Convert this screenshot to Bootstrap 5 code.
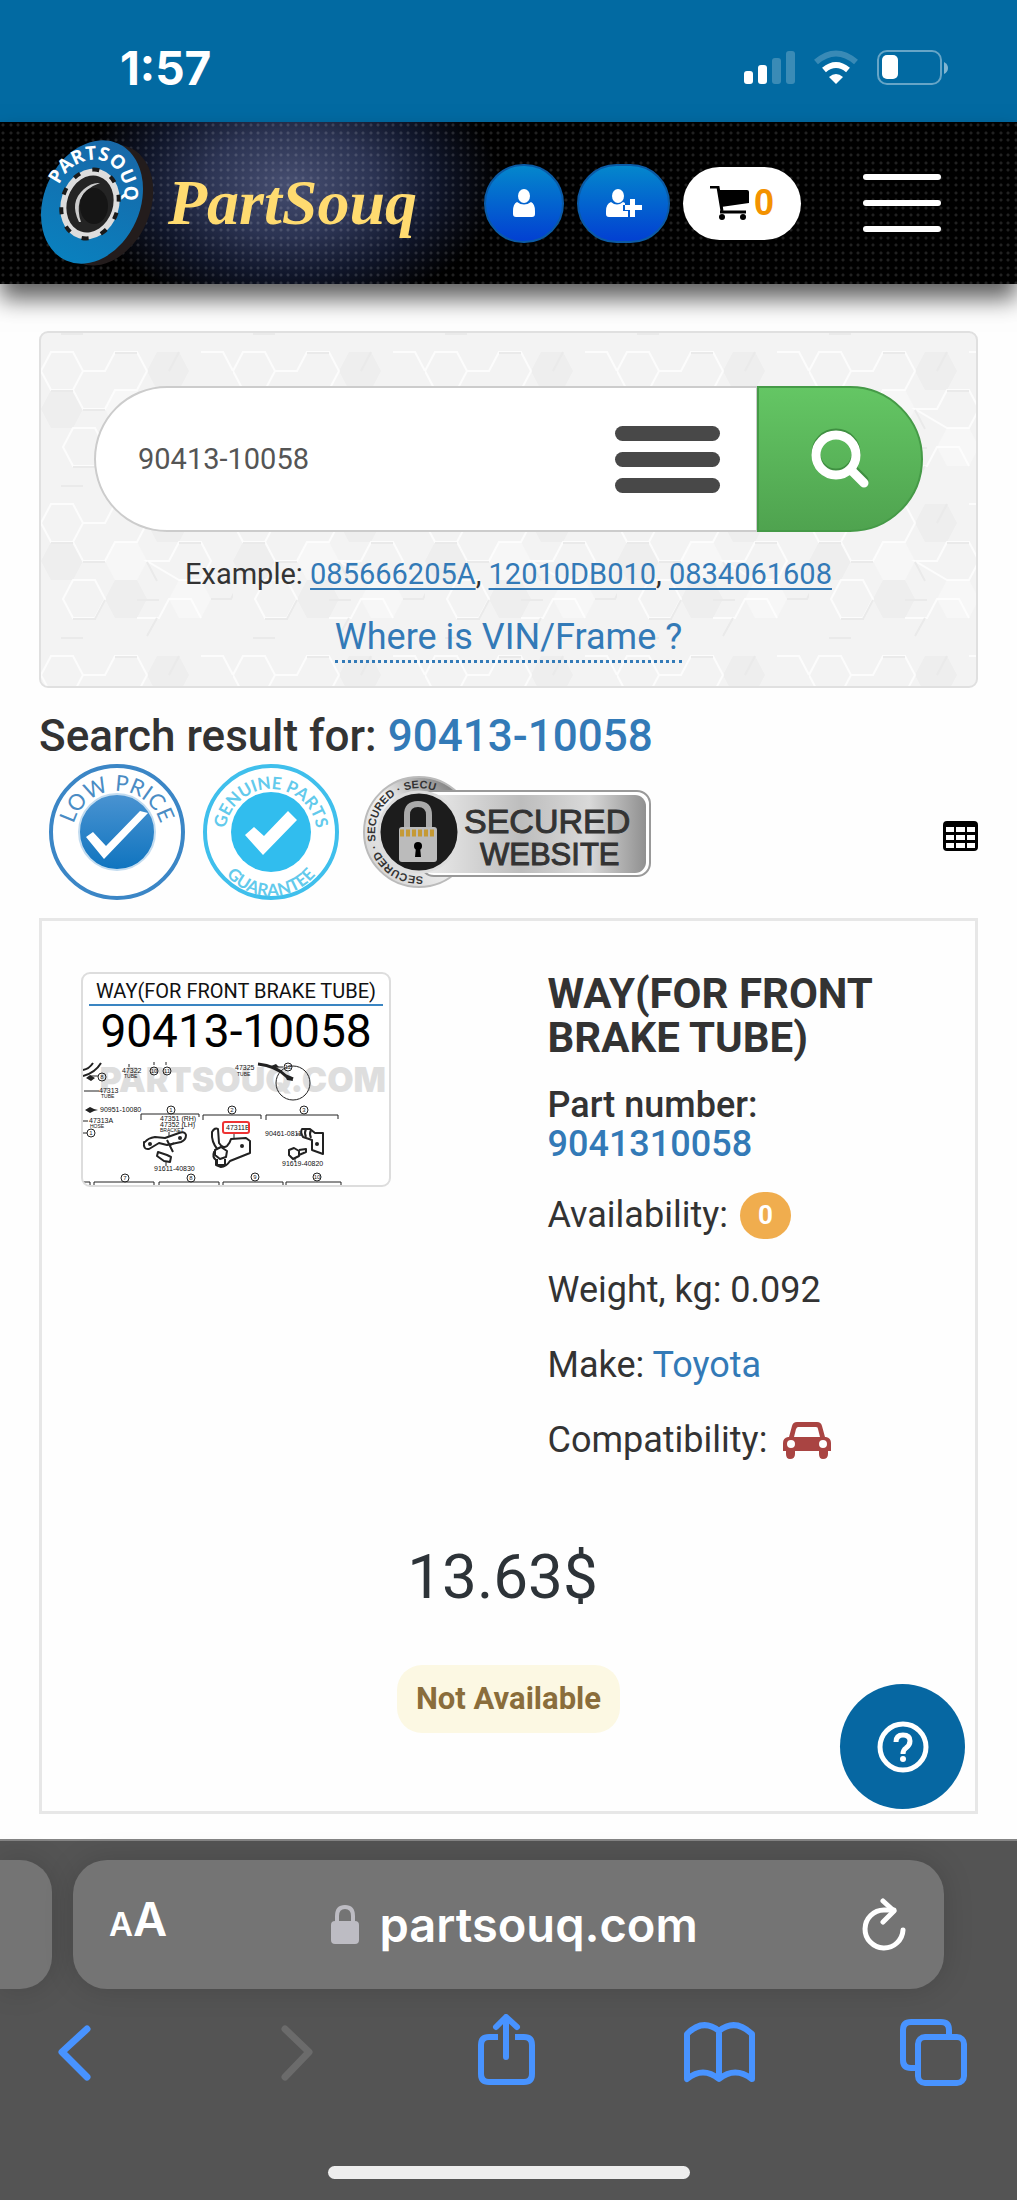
<!DOCTYPE html>
<html lang="en">
<head>
<meta charset="utf-8">
<meta name="viewport" content="width=device-width, initial-scale=1">
<title>PartSouq</title>
<link href="https://cdn.jsdelivr.net/npm/bootstrap@5.3.0/dist/css/bootstrap.min.css" rel="stylesheet">
<style>
body{font-family:Roboto,"Liberation Sans",sans-serif;color:#333;background:#fefefe;overflow-x:hidden}
a{color:#337ab7;text-decoration:none}
svg{display:block;flex-shrink:0}
button{padding:0;border:0;background:none}
.phone-status{height:122px;background:#026aa2;color:#fff;padding:0 69px 28px 120px;font-family:Inter,sans-serif}
.phone-time{font-size:46px;line-height:52px;font-weight:700}
.site-head{position:relative;height:162px;padding:0 76px 0 39px;background-color:#000;
 background-image:radial-gradient(circle at 3px 3px,rgba(255,255,255,.13) 1px,transparent 2px),radial-gradient(circle at 11px 3px,rgba(255,255,255,.13) 1px,transparent 2px),radial-gradient(circle at 3px 11px,rgba(255,255,255,.13) 1px,transparent 2px),radial-gradient(circle at 11px 11px,rgba(255,255,255,.13) 1px,transparent 2px),radial-gradient(ellipse 210px 130px at 290px 62px,#464e70 0,#2c3453 40%,#10162a 70%,#000 100%);
 background-size:15px 15px,15px 15px,15px 15px,15px 15px,auto;box-shadow:0 15px 22px rgba(0,0,0,.62)}
.brand-name{font:italic 700 64px/80px "Liberation Serif",serif;color:#ffdb70}
.head-tools{gap:13px}
.round-btn{height:79px;border-radius:40px;color:#fff;background:linear-gradient(#0487cc,#0240d2);border:2px solid #0b5aa5}
.w-user{width:80px}.w-plus{width:93px}
.cart-btn{width:118px;height:73px;border-radius:37px;background:#fff;color:#f39200;font:700 36px/40px "Liberation Sans",sans-serif;gap:5px}
.menu-btn{width:78px;margin-left:49px;gap:20px}
.menu-btn span{height:6px;border-radius:3px;background:#fff}
.page-main{padding:47px 39px 25px}
.search-well{position:relative;overflow:hidden;padding:53px 53px 23px;border:2px solid #e0e0e0;border-radius:9px;background:#f3f3f3}
.hex-bg{position:absolute;top:0;left:0}
.search-well>*:not(.hex-bg){position:relative}
.search-box{height:146px;border:2px solid #ccc;border-right-width:1px;border-radius:73px 0 0 73px;background:#fff;padding:0 36px 0 42px}
.search-box input{border:0;outline:0;min-width:0;background:none;font-size:29px;line-height:40px;color:#555;padding:0}
.list-btn{width:105px;gap:11px}
.list-btn span{height:15px;border-radius:8px;background:#484848}
.go-btn{width:166px;height:146px;border-radius:0 73px 73px 0;border:2px solid #459a47;background:linear-gradient(#64c664,#4fa34f)}
.hint{margin-top:22px;font-size:29px;line-height:40px}
.hint a{text-decoration:underline;text-decoration-thickness:2px;text-underline-offset:4px}
.vin{margin-top:20px;font-size:36px;line-height:46px;border-bottom:3px dotted #337ab7}
.result-title{margin:24px 0 0;font-size:44px;line-height:48px;font-weight:500}
.trust{height:144px;margin-bottom:14px;padding-left:8px;gap:15px}
.part-card{border:3px solid #e7e7e7;background:#fefefe;padding:51px 0 78px}
.part-card .col-6{padding:0 39px}
.thumb{display:block;width:310px;border:2px solid #ddd;border-radius:9px;overflow:hidden;background:#fff}
.part-name{font-size:42px;line-height:44px;font-weight:700;margin:0 0 26px}
.part-no{font-size:36px;line-height:39px;font-weight:500;margin:0 0 26px}
.fact{font-size:36px;line-height:50px;margin:0 0 25px}
.stock-fact{gap:12px}
.stock{width:51px;height:47px;border-radius:24px;background:#f0ad4e;color:#fff;font-size:26px;line-height:47px;font-weight:700}
.price{margin-top:68px;padding-right:12px;font-size:62px;line-height:88px;color:#2d3338}
.state{margin-top:44px;padding:0 19px;height:68px;line-height:68px;border-radius:25px;background:#fcf8e3;color:#8a6d3b;font-size:31px;font-weight:700}
.help-btn{position:absolute;right:10px;bottom:2px;width:125px;height:125px;border-radius:50%;background:#0667a2}
.safari{background:#545454;border-top:2px solid #858585;padding:19px 0 21px;font-family:Inter,sans-serif}
.tab-stub,.url-pill{height:129px;background:#747474;box-shadow:0 0 30px rgba(0,0,0,.15)}
.tab-stub{width:52px;border-radius:0 32px 32px 0}
.url-pill{margin:0 73px 0 21px;border-radius:34px;padding:0 38px 0 36px;color:#fff}
.aa-btn{color:#fff;font-weight:600;line-height:56px}
.aa-s{font-size:33px}.aa-l{font-size:47px}
.url-text{font-size:47px;line-height:56px;font-weight:600;gap:20px;color:#fff}
.tool-row{margin-top:25px;padding:0 47px 0 38px}
.home-bar{margin:80px auto 0;width:362px;height:13px;border-radius:7px;background:#eee}
</style>
</head>
<body>
<div class="phone-status d-flex align-items-end justify-content-between">
  <div class="phone-time">1:57</div>
  <svg width="208" height="46" viewBox="0 0 208 46" aria-label="Signal, Wi-Fi and battery">
    <g fill="#fff"><rect x="4" y="23" width="9" height="13" rx="3"/><rect x="18" y="17" width="9" height="19" rx="3"/><g opacity=".22"><rect x="32" y="10" width="9" height="26" rx="3"/><rect x="46" y="3" width="9" height="33" rx="3"/></g>
    <path d="M96 36l-7-7q7-6 14 0z"/></g>
    <path d="M84 22q12-10 24 0" fill="none" stroke="#fff" stroke-width="6"/>
    <path d="M76 14q20-17 40 0" fill="none" stroke="#fff" stroke-opacity=".22" stroke-width="6"/>
    <rect x="138" y="3" width="63" height="33" rx="9" fill="none" stroke="#fff" stroke-opacity=".4" stroke-width="2"/>
    <rect x="142" y="7" width="16" height="24" rx="5" fill="#fff"/><path d="M204 14q4 2 4 6t-4 6z" fill="#fff" opacity=".5"/>
  </svg>
</div>

<header class="site-head d-flex align-items-center">
  <a href="#" class="d-flex align-items-center gap-2">
    <svg width="121" height="130" viewBox="0 0 121 130">
      <defs><linearGradient id="tyre" x1="0" y1="0" x2="0" y2="1"><stop offset="0" stop-color="#1768a8"/><stop offset="1" stop-color="#0a80be"/></linearGradient></defs>
      <ellipse cx="65" cy="67" rx="46" ry="63" transform="rotate(24 65 67)" fill="#231c1c"/>
      <ellipse cx="53" cy="64" rx="48" ry="64" transform="rotate(24 53 64)" fill="url(#tyre)"/>
      <ellipse cx="51" cy="66" rx="29" ry="36" transform="rotate(18 51 66)" fill="#ddd"/>
      <ellipse cx="51" cy="66" rx="28" ry="35" transform="rotate(18 51 66)" fill="none" stroke="#1a1a1a" stroke-width="4" stroke-dasharray="7 13"/>
      <ellipse cx="51" cy="66" rx="23" ry="29" transform="rotate(18 51 66)" fill="#242424"/>
      <path d="M40 84Q30 64 45 51q8-7 16-6Q46 50 41 62q-3 11 1 22z" fill="#ccc"/>
      <ellipse cx="55" cy="68" rx="14" ry="18" fill="#151515"/>
      <path id="tyreArc" d="M20 47C29 26 51 17 67 24C85 33 90 54 81 78" fill="none"/>
      <text font-family="Open Sans,sans-serif" font-size="19" font-weight="700" fill="#fff"><textPath href="#tyreArc">PARTSOUQ</textPath></text>
    </svg>
    <span class="brand-name">PartSouq</span>
  </a>
  <div class="head-tools d-flex align-items-center ms-auto">
    <button class="round-btn w-user d-flex align-items-center justify-content-center" aria-label="Sign in">
      <svg width="22" height="28" viewBox="0 0 22 28" fill="#fff"><ellipse cx="11" cy="7" rx="6" ry="7"/><path d="M4 13q7 5 14 0 4 2 4 9v3q0 3-3 3H3q-3 0-3-3v-3q0-7 4-9z"/></svg></button>
    <button class="round-btn w-plus d-flex align-items-center justify-content-center" aria-label="Register">
      <svg width="36" height="28" viewBox="0 0 36 28" fill="#fff"><ellipse cx="12" cy="7" rx="6" ry="7"/><path d="M5 13q6 5 12 0l2 1v2h-2v6h5v6H3q-3 0-3-3v-3q0-7 5-9z"/><path d="M24 10h5v6h7v5h-7v7h-5v-7h-5v-5h5z"/></svg></button>
    <button class="cart-btn d-flex align-items-center justify-content-center" aria-label="Cart">
      <svg width="39" height="34" viewBox="0 0 39 34"><path d="M0 1h8l4 24" fill="none" stroke="#000" stroke-width="3"/><path d="M8 4h29q2 0 2 2v11l-28 4z"/><path d="M10 26h26" stroke="#000" stroke-width="3"/><circle cx="12" cy="31" r="3"/><circle cx="33" cy="31" r="3"/></svg>0</button>
    <button class="menu-btn d-flex flex-column" aria-label="Menu"><span></span><span></span><span></span></button>
  </div>
</header>

<main class="page-main position-relative">
  <section class="search-well text-center">
    <svg class="hex-bg" width="100%" height="100%" aria-hidden="true">
      <defs><pattern id="hex" width="192" height="152" patternUnits="userSpaceOnUse">
        <g fill="#eeeeee"><path d="M106 38l10-19h22l10 19-10 19h-22zM64 114l10-19h22l10 19-10 19H74zM0 76l10-19h22l10 19-10 19H10z"/></g>
        <g fill="#f7f7f7"><path d="M74 57h22l10 19-10 19H74L64 76zM138 95h22l10 19-10 19h-22l-10-19z"/></g>
        <g fill="none" stroke-width="2" stroke="#fff" stroke-opacity=".75">
          <path d="M10 19h22l10 19-10 19H10L0 38zM42 38h22l10-19h22l10 19-10 19H74L64 76H42L32 57M106 76h22l10-19h22l10 19-10 19h-22zM32 95h22l10 19-10 19H32l-10-19zM96 133h22l10-19h22l10 19M160 19h22l10 19"/></g>
        <g fill="none" stroke="#eaeaea" stroke-width="2"><path d="M10 58h22M42 77h22M74 20h22M106 77l10 19M138 58h22M32 134h22l10-19M96 115h22M128 38l10-19M170 114h20l6-12M20 1h22M106 151l10-18"/></g>
      </pattern></defs><rect width="100%" height="100%" fill="url(#hex)"/></svg>
    <form class="d-flex" onsubmit="return false">
      <div class="search-box d-flex align-items-center flex-grow-1">
        <input type="text" class="flex-grow-1" value="90413-10058" aria-label="Part number or VIN">
        <button type="button" class="list-btn d-flex flex-column" aria-label="Search history"><span></span><span></span><span></span></button>
      </div>
      <button class="go-btn d-flex align-items-center justify-content-center" aria-label="Search">
        <svg width="60" height="64" viewBox="0 0 60 64" fill="none" stroke-linecap="round"><g stroke="#3f8f41"><circle cx="26" cy="26" r="20" stroke-width="9"/><path d="M41 40l13 13" stroke-width="9"/></g><g stroke="#fff"><circle cx="26" cy="28" r="20" stroke-width="9"/><path d="M41 43l13 13" stroke-width="9"/></g></svg></button>
    </form>
    <div class="hint">Example: <a href="#">085666205A</a>, <a href="#">12010DB010</a>, <a href="#">0834061608</a></div>
    <a href="#" class="vin d-inline-block align-top">Where is VIN/Frame ?</a>
  </section>

  <h1 class="result-title">Search result for: <a href="#">90413-10058</a></h1>

  <div class="trust d-flex align-items-center">
    <svg width="140" height="140" viewBox="0 0 140 140">
      <defs><linearGradient id="lp" x1="0" y1="0" x2="0" y2="1"><stop offset="0" stop-color="#4a93d1"/><stop offset="1" stop-color="#0f74bf"/></linearGradient></defs>
      <circle cx="70" cy="70" r="66" fill="#fff" stroke="#3b86c6" stroke-width="4"/><circle cx="70" cy="70" r="38" fill="url(#lp)" stroke="#c3dcf0" stroke-width="2"/>
      <path d="M39 75l7-5 13 14 34-35 8 2-44 46z" fill="#fff"/>
      <path id="lpArc" d="M25 74A45 45 0 0 1 115 74" fill="none"/>
      <text font-family="Lato,sans-serif" font-size="22" fill="#4a8cc4"><textPath href="#lpArc" startOffset="50%" text-anchor="middle">LOW PRICE</textPath></text></svg>
    <svg width="140" height="140" viewBox="0 0 140 140">
      <circle cx="69" cy="70" r="66" fill="#fff" stroke="#3fbfec" stroke-width="4"/><circle cx="69" cy="70" r="40" fill="#31bdee"/>
      <path d="M43 73l9-8 10 9 24-25 9 9-34 35z" fill="#fff"/>
      <path id="gpArc" d="M23 73A46 46 0 0 1 115 73" fill="none"/><path id="ggArc" d="M11 76A58 58 0 0 0 127 76" fill="none"/>
      <g font-family="Lato,sans-serif" font-size="17" font-weight="700" fill="#62caec"><text><textPath href="#gpArc" startOffset="50%" text-anchor="middle">GENUINE PARTS</textPath></text><text><textPath href="#ggArc" startOffset="50%" text-anchor="middle">GUARANTEE</textPath></text></g></svg>
    <svg width="300" height="120" viewBox="-4 0 300 120">
      <defs><linearGradient id="sil"><stop offset="0" stop-color="#eee"/><stop offset=".45" stop-color="#bdbdbd"/><stop offset=".75" stop-color="#d9d9d9"/><stop offset="1" stop-color="#909090"/></linearGradient>
      <linearGradient id="ring" x1="0" y1="1" x2="1" y2="0"><stop offset="0" stop-color="#ccc"/><stop offset=".5" stop-color="#f2f2f2"/><stop offset="1" stop-color="#555"/></linearGradient></defs>
      <circle cx="58" cy="60" r="55" fill="url(#ring)" stroke="#bbb" stroke-width="2"/>
      <rect x="60" y="19" width="229" height="85" rx="13" fill="#fff" stroke="#999" stroke-width="2"/>
      <rect x="58" y="23" width="227" height="78" rx="11" fill="url(#sil)"/>
      <circle cx="58" cy="60" r="40" fill="#1c1c1c" stroke="#ddd" stroke-width="3"/>
      <path id="seArc" d="M62 104A44 44 0 1 1 76 20" fill="none"/>
      <text font-family="Liberation Sans,sans-serif" font-size="11" font-weight="700" fill="#333"><textPath href="#seArc">SECURED · SECURED · SECURED</textPath></text>
      <path d="M46 57V43q0-11 11-11t11 11v14" fill="none" stroke="#aaa" stroke-width="6"/><rect x="38" y="55" width="38" height="35" rx="3" fill="#bbb"/><path d="M39 61h36" stroke="#c59a35" stroke-width="7" stroke-dasharray="4 2"/><circle cx="57" cy="74" r="4"/><path d="M55 75h4l1 10h-6z"/>
      <g font-family="Liberation Sans,sans-serif" fill="#333" stroke="#333"><text x="103" y="61" font-size="34">SECURED</text><text x="119" y="93" font-size="31">WEBSITE</text></g></svg>
    <button class="ms-auto mt-2" aria-label="Table view">
      <svg width="35" height="30" viewBox="0 0 35 30"><path fill="#000" fill-rule="evenodd" d="M4 0h27q4 0 4 4v22q0 4-4 4H4q-4 0-4-4V4q0-4 4-4zM3 6v5h8V6zM13 6v5h9V6zM24 6v5h8V6zM3 14v5h8v-5zM13 14v5h9v-5zM24 14v5h8v-5zM3 22v5h8v-5zM13 22v5h9v-5zM24 22v5h8v-5z"/></svg></button>
  </div>

  <section class="part-card position-relative">
    <div class="row g-0">
      <div class="col-6">
        <a href="#" class="thumb" aria-label="Part diagram">
          <svg width="100%" viewBox="0 0 306 211" font-family="Roboto,sans-serif">
            <text x="153" y="24" font-size="20" text-anchor="middle" fill="#111">WAY(FOR FRONT BRAKE TUBE)</text>
            <path d="M6 31h294" stroke="#3a85c2" stroke-width="2"/>
            <text x="153" y="73" font-size="46" text-anchor="middle" fill="#000">90413-10058</text>
            <text x="303" y="118" font-family="Inter,sans-serif" font-weight="900" font-size="34" text-anchor="end" fill="#dedede">PARTSOUQ.COM</text>
            <g font-family="Liberation Sans,sans-serif" font-size="7" fill="#111"><text x="39" y="99">47322</text><text x="41" y="104" font-size="5">TUBE</text><text x="152" y="96">47325</text><text x="154" y="102" font-size="5">TUBE</text><text x="16" y="119">47313</text><text x="18" y="124" font-size="5">TUBE</text><text x="17" y="138">90951-10080</text><text x="6" y="149">47313A</text><text x="7" y="154" font-size="5">HOSE</text><text x="77" y="147">47351 (RH)</text><text x="77" y="153">47352 (LH)</text><text x="77" y="158" font-size="5">BRACKET</text><text x="71" y="197">91611-40830</text><text x="143" y="156">47311B</text><text x="182" y="162">90461-08112</text><text x="199" y="192">91619-40820</text></g>
            <g fill="none" stroke="#222" stroke-width="1"><path d="M58 146v-6h58v3M120 146v-5h58v4M183 146v-5h72v4M0 208h7v3M11 211v-3h60v3M76 211v-3h60v3M140 211v-3h60v3M203 211v-3h55v3M15 102H7M1 117h15M0 147h5M0 159h4M86 158v12M151 158v10M83 187v5M212 182v6M213 160h7M46 90v3M71 88v3M83 88v3M200 93h-10"/>
            <circle cx="210" cy="109" r="17"/><path d="M175 90q18 2 28 12l7 3" stroke-width="3"/><path d="M0 102q12-3 18-13M0 96q6-1 10-7" stroke-width="2"/>
            <circle cx="88" cy="136" r="4"/><circle cx="149" cy="136" r="4"/><circle cx="221" cy="136" r="4"/><circle cx="19" cy="103" r="4"/><circle cx="71" cy="97" r="4"/><circle cx="84" cy="97" r="4"/><circle cx="205" cy="93" r="4"/><circle cx="8" cy="159" r="4"/><circle cx="42" cy="204" r="4"/><circle cx="108" cy="204" r="4"/><circle cx="172" cy="203" r="4"/><circle cx="234" cy="203" r="4"/></g>
            <g font-family="Liberation Sans,sans-serif" font-size="6" text-anchor="middle" fill="#222"><text x="88" y="138">1</text><text x="149" y="138">2</text><text x="221" y="138">3</text><text x="19" y="105">8</text><text x="71" y="99">10</text><text x="84" y="99">11</text><text x="205" y="95">12</text><text x="8" y="161">1</text><text x="42" y="206">7</text><text x="108" y="206">8</text><text x="172" y="205">9</text><text x="234" y="205">10</text></g>
            <g fill="#fff" stroke="#222" stroke-width="2" stroke-linejoin="round"><path d="M62 168q3-4 10-5l10 1 14-5q6-2 7 2 0 5-5 7l-14 3-8-2-10 6q-6 1-5-7z"/><path d="M84 166l6 12M86 172l5-3" fill="none"/><path d="M75 178l9 3 4 2-1 5-6-1-7-5z"/><path d="M129 158q3-5 6-3l1 14q4 6 8 3 3-3 4-7l15-1 4 3v12l-20 8q-4 6-9 6l-5-2v-5q-4-3-2-8l4-2q-7-8-6-18z"/><path d="M132 176l6-3 6 4-1 6-6 2-5-4zM134 185v6h8v-6"/><path d="M219 155h8l5 4h8v21l-11-4v-10l-9-3q-3-5-1-8z"/><path d="M223 155q-2 4 0 8M228 156q-2 4 0 8" fill="none"/><path d="M206 176l5-2 5 3v5l-6 3-4-4zM216 176l7-1v3l-7 3"/></g>
            <g fill="#222"><circle cx="67" cy="170" r="2"/><circle cx="97" cy="164" r="2"/><circle cx="159" cy="172" r="2"/><circle cx="234" cy="170" r="2"/><path d="M2 136l5-3 4 2 4 1-4 1-4 2zM3 104l4-3 5 3-4 3zM188 92l5-2 3 3-5 1zM202 102l6 1 2 4-6-1z"/></g>
            <rect x="140" y="148" width="26" height="11" rx="2" fill="none" stroke="#e33" stroke-width="2"/>
          </svg></a>
      </div>
      <div class="col-6">
        <h2 class="part-name">WAY(FOR FRONT BRAKE TUBE)</h2>
        <h3 class="part-no">Part number: <a href="#" class="d-block">9041310058</a></h3>
        <p class="fact stock-fact d-flex align-items-center">Availability: <span class="stock text-center">0</span></p>
        <p class="fact">Weight, kg: 0.092</p>
        <p class="fact">Make: <a href="#">Toyota</a></p>
        <p class="fact d-flex align-items-center mb-0 gap-3">Compatibility:
          <svg width="48" height="37" viewBox="0 0 48 37"><path fill="#a94442" fill-rule="evenodd" d="M14 0h20q4 0 5 4l3 11h1q5 1 5 6v8h-3v3q0 5-5 5-4 0-4-5v-3H12v3q0 5-5 5-4 0-4-5v-3H0v-8q0-5 5-6h1L9 4q1-4 5-4zm1 5q-1 0-2 2l-2 8h26l-2-8q0-2-2-2zM8 18a4 4 0 1 0 0 8 4 4 0 0 0 0-8zm32 0a4 4 0 1 0 0 8 4 4 0 0 0 0-8z"/></svg></p>
      </div>
    </div>
    <div class="text-center">
      <div class="price">13.63$</div>
      <span class="state d-inline-block align-top">Not Available</span>
    </div>
    <button class="help-btn d-flex align-items-center justify-content-center" aria-label="Help">
      <svg width="54" height="54" viewBox="0 0 54 54" fill="none" stroke="#fff" stroke-width="5"><circle cx="27" cy="27" r="23"/><path d="M20 22q0-7 7-7t7 6q0 4-4 7-3 2-3 6"/><circle cx="27" cy="39" r="3" fill="#fff" stroke="none"/></svg></button>
  </section>
</main>

<footer class="safari">
  <div class="d-flex">
    <div class="tab-stub"></div>
    <div class="url-pill d-flex align-items-center justify-content-between flex-grow-1">
      <button class="aa-btn" aria-label="Page settings"><span class="aa-s">A</span><span class="aa-l">A</span></button>
      <a href="#" class="url-text d-flex align-items-center"><svg width="28" height="39" viewBox="0 0 28 39"><rect y="16" width="28" height="23" rx="4" fill="#bdbcc3"/><path d="M6 17v-6q0-9 8-9t8 9v6" fill="none" stroke="#bdbcc3" stroke-width="4"/></svg>partsouq.com</a>
      <button aria-label="Reload"><svg width="44" height="54" viewBox="0 0 44 54" fill="none" stroke="#fff" stroke-width="5" stroke-linecap="round" stroke-linejoin="round"><path d="M41 32A19 19 0 1 1 22 12h10"/><path d="M21 3l11 10-11 11"/></svg></button>
    </div>
  </div>
  <nav class="tool-row d-flex justify-content-between">
    <button aria-label="Back"><svg width="72" height="72" viewBox="0 0 72 72" fill="none" stroke="#4893ff" stroke-width="7" stroke-linecap="round" stroke-linejoin="round"><path d="M49 15L24 38l25 25"/></svg></button>
    <button aria-label="Forward" disabled><svg width="72" height="72" viewBox="0 0 72 72" fill="none" stroke="#6b6b6b" stroke-width="7" stroke-linecap="round" stroke-linejoin="round"><path d="M32 15l24 23-24 25"/></svg></button>
    <button aria-label="Share"><svg width="72" height="72" viewBox="0 0 72 72" fill="none" stroke="#4893ff" stroke-width="6" stroke-linecap="round" stroke-linejoin="round"><path d="M38 43V4M28 13L38 3l11 10"/><path stroke-linecap="butt" d="M30 23h-9q-8 0-8 8v29q0 8 8 8h35q8 0 8-8V31q0-8-8-8h-9"/></svg></button>
    <button aria-label="Bookmarks"><svg width="72" height="72" viewBox="0 0 72 72" fill="none" stroke="#4893ff" stroke-width="6" stroke-linejoin="round"><path d="M4 65V20Q20 4 36 17Q52 4 69 20v45Q52 52 36 65Q20 52 4 65zM36 17v48"/></svg></button>
    <button aria-label="Tabs"><svg width="72" height="72" viewBox="0 0 72 72" fill="none" stroke="#4893ff" stroke-width="6"><rect x="20" y="23" width="46" height="46" rx="7"/><path d="M19 54h-6q-8 0-8-8V16q0-8 8-8h30q8 0 8 8v5"/></svg></button>
  </nav>
  <div class="home-bar"></div>
</footer>
<script src="https://cdn.jsdelivr.net/npm/bootstrap@5.3.0/dist/js/bootstrap.bundle.min.js"></script>
</body>
</html>
